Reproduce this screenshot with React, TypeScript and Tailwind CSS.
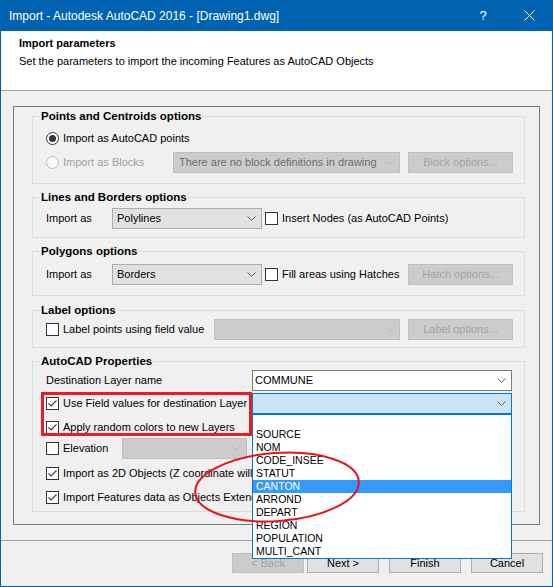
import type { ReactNode } from 'react'

const fieldNames = ['', 'SOURCE', 'NOM', 'CODE_INSEE', 'STATUT', 'CANTON', 'ARROND', 'DEPART', 'REGION', 'POPULATION', 'MULTI_CANT']

type ComboVariant = 'normal' | 'edit' | 'focus' | 'disabled'

const comboStyles: Record<ComboVariant, string> = {
  normal: 'bg-[#e1e1e1] border-[#adadad] text-black pl-[4px]',
  edit: 'bg-white border-[#7a7a7a] text-black pl-[2px]',
  focus: 'bg-[#cce4f7] border-[#0078d7] text-black pl-[4px]',
  disabled: 'bg-[#cccccc] border-[#bfbfbf] text-[#6d6d6d] pl-[5px]',
}

function Chevron({ color }: { color: string }) {
  return (
    <svg width="9" height="5" viewBox="0 0 9 5" className="shrink-0">
      <polyline points="0.5,0.5 4.5,4.5 8.5,0.5" fill="none" stroke={color} strokeWidth="1" />
    </svg>
  )
}

interface ComboProps {
  value?: string
  variant?: ComboVariant
  className?: string
}

function Combo({ value = '', variant = 'normal', className = '' }: ComboProps) {
  return (
    <div className={`flex h-[21px] shrink-0 items-center justify-between border pr-[5px] ${comboStyles[variant]} ${className}`}>
      <span className="truncate">{value}</span>
      <Chevron color={variant === 'disabled' ? '#b5b5b5' : '#606060'} />
    </div>
  )
}

function CheckBox({ checked = false }: { checked?: boolean }) {
  return (
    <span className="flex h-[13px] w-[13px] shrink-0 items-center justify-center border border-[#333333] bg-white">
      {checked && (
        <svg width="11" height="11" viewBox="0 0 11 11">
          <polyline points="1.5,5.5 4,8 9.5,2.5" fill="none" stroke="#3c3c3c" strokeWidth="1.1" />
        </svg>
      )}
    </span>
  )
}

function Radio({ checked = false, disabled = false }: { checked?: boolean; disabled?: boolean }) {
  return (
    <span
      className={`flex h-[13px] w-[13px] shrink-0 items-center justify-center rounded-full border ${
        disabled ? 'border-[#bcbcbc] bg-[#f7f7f7]' : 'border-[#333333] bg-white'
      }`}
    >
      {checked && <span className="h-[7px] w-[7px] rounded-full bg-[#333333]" />}
    </span>
  )
}

function Btn({ children, disabled = false, className = '' }: { children: ReactNode; disabled?: boolean; className?: string }) {
  return (
    <button
      type="button"
      disabled={disabled}
      className={`flex shrink-0 items-center justify-center border ${
        disabled ? 'border-[#bfbfbf] bg-[#cccccc] text-[#a3a3a3]' : 'border-[#adadad] bg-[#e1e1e1] text-black'
      } ${className}`}
    >
      {children}
    </button>
  )
}

interface GroupProps {
  title: string
  className?: string
  bodyClassName?: string
  children: ReactNode
}

function Group({ title, className = '', bodyClassName = '', children }: GroupProps) {
  return (
    <fieldset className={`border border-[#dcdcdc] ${className}`}>
      <legend className="ml-[7px] px-[1px] text-[11.5px] font-bold leading-[15px]">{title}</legend>
      <div className={`pl-[13px] pr-[11px] ${bodyClassName}`}>{children}</div>
    </fieldset>
  )
}

function FieldList() {
  return (
    <div className="absolute left-0 top-[21px] z-20 flex h-[145px] w-[260px] flex-col border border-[#0078d7] bg-white">
      {fieldNames.map((name, i) => (
        <div
          key={i}
          className={`h-[13px] shrink-0 pl-[3px] text-[10.5px] leading-[13px] ${
            name === 'CANTON' ? 'bg-[#3399ff] text-white' : 'text-black'
          }`}
        >
          {name}
        </div>
      ))}
    </div>
  )
}

export default function App() {
  return (
    <div className="relative flex h-[587px] w-[553px] flex-col overflow-hidden bg-[#0063b1] px-px pb-px font-['Liberation_Sans',Arial,sans-serif] text-[11px] text-black">
      {/* title bar */}
      <div className="flex h-[31px] shrink-0 items-center text-white">
        <span className="pl-[8px] text-[12px]">Import - Autodesk AutoCAD 2016 - [Drawing1.dwg]</span>
        <div className="ml-auto flex h-full">
          <div className="flex w-[46px] items-center justify-center text-[13px]">?</div>
          <div className="flex w-[46px] items-center justify-center">
            <svg width="11" height="11" viewBox="0 0 11 11">
              <path d="M0.5 0.5 L10.5 10.5 M10.5 0.5 L0.5 10.5" stroke="white" strokeWidth="1" />
            </svg>
          </div>
        </div>
      </div>

      {/* header */}
      <div className="h-[60px] shrink-0 border-b border-[#a0a0a0] bg-white pl-[18px] pt-[6px]">
        <div className="font-bold leading-[13px]">Import parameters</div>
        <div className="mt-[5px] leading-[13px]">Set the parameters to import the incoming Features as AutoCAD Objects</div>
      </div>

      <div className="flex flex-1 flex-col bg-[#f0f0f0]">
        <div className="mx-[12px] mt-[15px] h-[419px] border border-[#7a7a7a] pl-[18px] pr-[14px] pt-[2px]">
          <Group title="Points and Centroids options" bodyClassName="pb-[10px]">
            <div className="mt-[4px] flex h-[20px] items-center gap-[4px]">
              <Radio checked />
              <span>Import as AutoCAD points</span>
            </div>
            <div className="mt-[4px] flex h-[21px] items-center">
              <div className="flex w-[127px] items-center gap-[4px] text-[#a0a0a0]">
                <Radio disabled />
                <span>Import as Blocks</span>
              </div>
              <Combo variant="disabled" value="There are no block definitions in drawing" className="w-[227px]" />
              <Btn disabled className="ml-auto h-[21px] w-[105px]">
                Block options...
              </Btn>
            </div>
          </Group>

          <Group title="Lines and Borders options" className="mt-[6px]" bodyClassName="pb-[8px]">
            <div className="mt-[3px] flex h-[21px] items-center">
              <span className="w-[66px] shrink-0">Import as</span>
              <Combo value="Polylines" className="w-[150px]" />
              <span className="ml-[3px]">
                <CheckBox />
              </span>
              <span className="ml-[4px]">Insert Nodes (as AutoCAD Points)</span>
            </div>
          </Group>

          <Group title="Polygons options" className="mt-[6px]" bodyClassName="pb-[10px]">
            <div className="mt-[5px] flex h-[21px] items-center">
              <span className="w-[66px] shrink-0">Import as</span>
              <Combo value="Borders" className="w-[150px]" />
              <span className="ml-[3px]">
                <CheckBox />
              </span>
              <span className="ml-[4px]">Fill areas using Hatches</span>
              <Btn disabled className="ml-auto h-[21px] w-[105px]">
                Hatch options...
              </Btn>
            </div>
          </Group>

          <Group title="Label options" className="mt-[7px]" bodyClassName="pb-[7px]">
            <div className="mt-[1px] flex h-[21px] items-center">
              <div className="flex w-[168px] shrink-0 items-center gap-[4px]">
                <CheckBox />
                <span>Label points using field value</span>
              </div>
              <Combo variant="disabled" className="w-[186px]" />
              <Btn disabled className="ml-auto h-[21px] w-[105px]">
                Label options...
              </Btn>
            </div>
          </Group>

          <Group title="AutoCAD Properties" className="mt-[6px]" bodyClassName="pb-[4px]">
            <div className="mt-[1px] flex h-[21px] items-center">
              <span className="w-[206px] shrink-0">Destination Layer name</span>
              <Combo variant="edit" value="COMMUNE" className="w-[260px]" />
            </div>
            <div className="mt-[2px] flex h-[21px] items-center">
              <div className="flex w-[206px] shrink-0 items-center gap-[4px] whitespace-nowrap">
                <CheckBox checked />
                <span>Use Field values for destination Layer</span>
              </div>
              <div className="relative">
                <Combo variant="focus" className="w-[260px]" />
                <FieldList />
              </div>
            </div>
            <div className="mt-[3px] flex h-[20px] items-center gap-[4px]">
              <CheckBox checked />
              <span>Apply random colors to new Layers</span>
            </div>
            <div className="mt-[1px] flex h-[21px] items-center">
              <div className="flex w-[76px] shrink-0 items-center gap-[4px]">
                <CheckBox />
                <span>Elevation</span>
              </div>
              <Combo variant="disabled" className="w-[125px]" />
            </div>
            {/* the open field list lies over the end of these two labels */}
            <div className="mt-[4px] flex h-[20px] items-center gap-[4px] whitespace-nowrap">
              <CheckBox checked />
              <span>Import as 2D Objects (Z coordinate will be ignored)</span>
            </div>
            <div className="mt-[4px] flex h-[20px] items-center gap-[4px] whitespace-nowrap">
              <CheckBox checked />
              <span>Import Features data as Objects Extended Data</span>
            </div>
          </Group>
        </div>

        <div className="mt-[15px] h-px shrink-0 bg-[#a0a0a0]" />

        <div className="mt-[12px] flex justify-end pr-[9px]">
          <Btn disabled className="h-[20px] w-[72px]">
            &lt; Back
          </Btn>
          <Btn className="ml-[3px] h-[20px] w-[72px]">Next &gt;</Btn>
          <Btn className="ml-[10px] h-[20px] w-[72px]">Finish</Btn>
          <Btn className="ml-[10px] h-[20px] w-[72px]">Cancel</Btn>
        </div>
      </div>

      {/* annotations drawn over the dialog */}
      <div className="pointer-events-none absolute left-[41px] top-[392px] z-30 h-[44px] w-[211px] border-[3px] border-[#ed1c24]" />
      <svg
        className="pointer-events-none absolute left-[190px] top-[448px] z-30 overflow-visible"
        width="175"
        height="80"
        viewBox="0 0 175 80"
      >
        <ellipse cx="87" cy="39" rx="82" ry="34" transform="rotate(-4 87 39)" fill="none" stroke="#e8141b" strokeWidth="2" />
      </svg>
    </div>
  )
}
